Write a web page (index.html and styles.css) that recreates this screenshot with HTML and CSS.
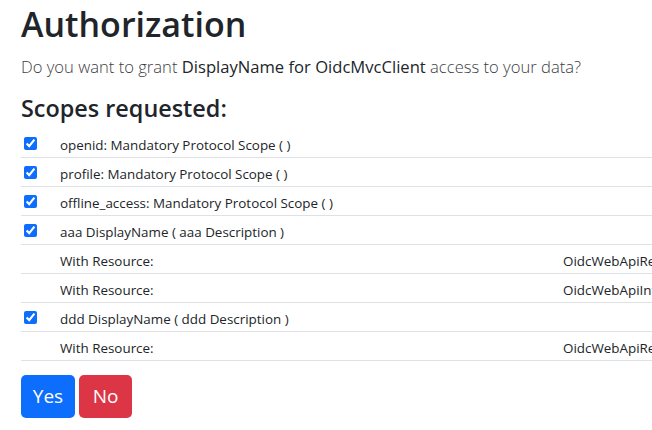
FILE: index.html
```html
<!DOCTYPE html>
<html>
<head>
<meta charset="utf-8">
<link rel="stylesheet" href="styles.css">
</head>
<body>
<div class="page">
  <h1 class="title">Authorization</h1>
  <p class="lead">Do you want to grant <span class="strong">DisplayName for OidcMvcClient</span> access to your data?</p>
  <h3 class="subtitle">Scopes requested:</h3>
  <table class="scopes">
    <tbody>
      <tr><td class="c-check"><input type="checkbox" checked></td><td class="c-name">openid: Mandatory Protocol Scope ( )</td><td class="c-res"></td></tr>
      <tr><td class="c-check"><input type="checkbox" checked></td><td class="c-name">profile: Mandatory Protocol Scope ( )</td><td class="c-res"></td></tr>
      <tr><td class="c-check"><input type="checkbox" checked></td><td class="c-name">offline_access: Mandatory Protocol Scope ( )</td><td class="c-res"></td></tr>
      <tr><td class="c-check"><input type="checkbox" checked></td><td class="c-name">aaa DisplayName ( aaa Description )</td><td class="c-res"></td></tr>
      <tr><td class="c-check"></td><td class="c-name">With Resource:</td><td class="c-res">OidcWebApiResource</td></tr>
      <tr><td class="c-check"></td><td class="c-name">With Resource:</td><td class="c-res">OidcWebApiIntrospection</td></tr>
      <tr><td class="c-check"><input type="checkbox" checked></td><td class="c-name">ddd DisplayName ( ddd Description )</td><td class="c-res"></td></tr>
      <tr><td class="c-check"></td><td class="c-name">With Resource:</td><td class="c-res">OidcWebApiResource</td></tr>
    </tbody>
  </table>
  <div class="actions">
    <button class="btn btn-yes">Yes</button>
    <button class="btn btn-no">No</button>
  </div>
</div>
</body>
</html>
```
FILE: styles.css
```css
html, body {
  margin: 0;
  padding: 0;
  background: #fff;
  overflow: hidden;
}
body {
  font-family: "Open Sans", "Noto Sans", sans-serif;
  color: #212529;
}
.page {
  padding: 1px 0 0 21px;
  width: 631px;
  overflow: hidden;
}
.title {
  margin: 0;
  font-size: 34px;
  font-weight: 600;
  line-height: 46px;
}
.lead {
  margin: 8px 0 0 0;
  font-size: 16.6px;
  font-weight: 300;
  line-height: 24px;
  color: #3c4045;
}
.lead .strong {
  font-weight: 400;
  color: #212529;
}
.subtitle {
  margin: 14px 0 0 0;
  font-size: 23.4px;
  font-weight: 600;
  line-height: 30px;
}
.scopes {
  margin-top: 6px;
  border-collapse: collapse;
  width: 800px;
  font-size: 13.4px;
  table-layout: fixed;
}
.scopes td {
  height: 24px;
  padding: 4px 0 0 0;
  border-bottom: 1px solid #dee2e6;
  vertical-align: middle;
}
.scopes td.c-check {
  padding: 0;
  height: 28px;
}
.c-check { width: 39px; }
.c-name { width: 503px; }
.c-res { width: 258px; white-space: nowrap; overflow: hidden; }
.c-check input {
  margin: 0 0 0 3px;
  width: 13px;
  height: 13px;
  display: block;
  accent-color: #0d6efd;
}
.actions {
  display: flex;
  gap: 4px;
  margin-top: 14px;
}
.btn {
  font-family: inherit;
  font-size: 19px;
  line-height: 29px;
  border: 0;
  border-radius: 5px;
  color: #fff;
  text-align: center;
}
.btn-yes { background: #0d6efd; padding: 7px 0; width: 54px; }
.btn-no { background: #dc3545; padding: 7px 0; width: 53px; }
```
